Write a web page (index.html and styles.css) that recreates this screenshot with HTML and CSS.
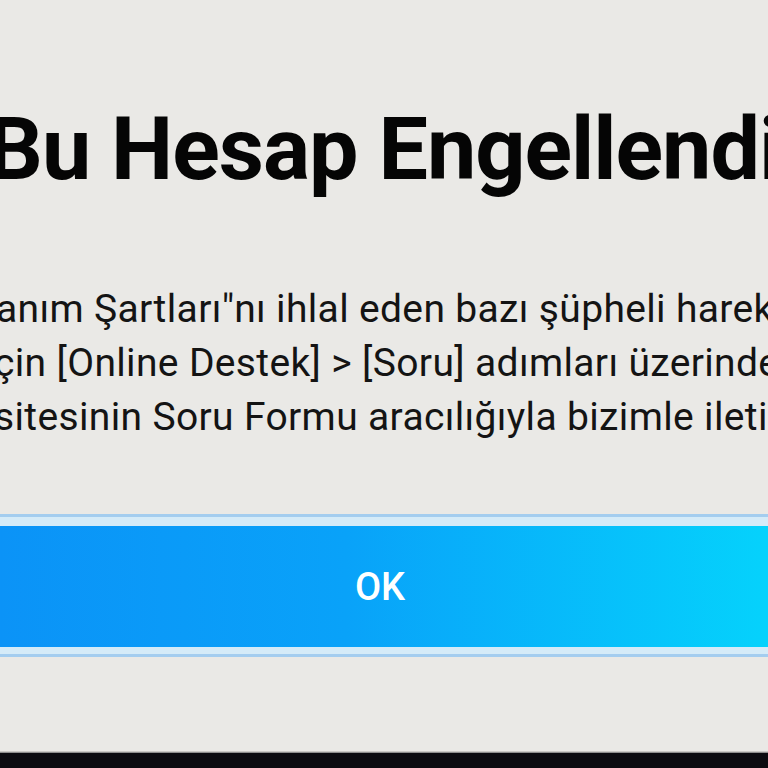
FILE: index.html
```html
<!DOCTYPE html>
<html lang="tr">
<head>
  <meta charset="UTF-8" />
  <meta name="viewport" content="width=device-width, initial-scale=1" />
  <title>Bu Hesap Engellendi</title>
  <link rel="stylesheet" href="styles.css">
</head>
<body>
  <div class="dialog">
    <h1 class="title"><span>Bu Hesap Engellendi</span></h1>

    <div class="message">
      <p class="line line-1">anım Şartları"nı ihlal eden bazı şüpheli hareketler</p>
      <p class="line line-2">çin [Online Destek] &gt; [Soru] adımları üzerinden</p>
      <p class="line line-3">sitesinin Soru Formu aracılığıyla bizimle iletişime</p>
    </div>

    <div class="btn-frame">
      <button class="ok-btn" type="button">OK</button>
    </div>
  </div>

  <div class="taskbar"></div>
</body>
</html>
```

FILE: styles.css
```css
html, body {
  margin: 0;
  height: 100%;
}

body {
  display: flex;
  flex-direction: column;
  background: #eae9e6;
  font-family: Roboto, "Noto Sans", sans-serif;
  color: #111;
  overflow: hidden;
}

.dialog {
  flex: 1;
  padding-top: 105px;
  border-bottom: 1px solid #c9c8c5;
}

.title {
  display: flex;
  justify-content: center;
  margin: 0;
  font-size: 88px;
  font-weight: 700;
  line-height: 88px;
  letter-spacing: -1px;
  white-space: nowrap;
  color: #050505;
}

.message {
  margin-top: 89px;
}

.line {
  margin: 0;
  font-size: 39px;
  line-height: 54px;
  letter-spacing: 0.35px;
  white-space: nowrap;
  color: #141414;
}

.line-1 { margin-left: -4px; }
.line-2 { margin-left: -6px; }
.line-3 { margin-left: -6px; }

.btn-frame {
  margin-top: 70px;
  background: #d5ebf8;
  border-top: 3px solid #a4cdef;
  border-bottom: 3px solid #a4cdef;
  padding: 9px 0 7px;
}

.ok-btn {
  display: flex;
  justify-content: center;
  align-items: center;
  width: 100%;
  height: 121px;
  padding: 0 8px 0 0;
  border: none;
  background: linear-gradient(to right, #0b93f7, #09a2f9 45%, #05d2fc);
  color: #fff;
  font-family: Roboto, sans-serif;
  font-size: 38px;
  font-weight: 500;
  cursor: pointer;
}

.taskbar {
  height: 15px;
  background: #0b0b10;
  border-top: 1px solid #8e8e8e;
}
```
